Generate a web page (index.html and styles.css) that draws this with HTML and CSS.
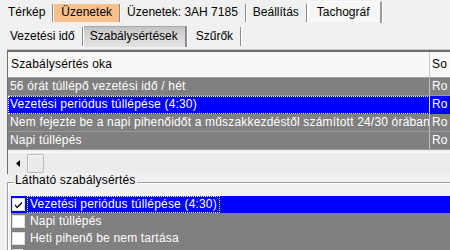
FILE: index.html
```html
<!DOCTYPE html>
<html>
<head>
<meta charset="utf-8">
<link rel="stylesheet" href="styles.css">
</head>
<body>
<div class="page">
  <div class="tabs1">
    <div class="tab t-terkep">Térkép</div>
    <div class="tab t-orange">Üzenetek</div>
    <div class="tab">Üzenetek: 3AH 7185</div>
    <div class="tab">Beállítás</div>
    <div class="tab sel1">Tachográf</div>
  </div>
  <div class="tabs2">
    <div class="tab2">Vezetési idő</div>
    <div class="tab2 sel2">Szabálysértések</div>
    <div class="tab2">Szűrők</div>
  </div>
  <div class="grid">
    <div class="row head">
      <div class="c1">Szabálysértés oka</div>
      <div class="c2">So</div>
    </div>
    <div class="row gray">
      <div class="c1">56 órát túllépő vezetési idő / hét</div>
      <div class="c2">Ro</div>
    </div>
    <div class="row blue">
      <div class="c1 focus">Vezetési periódus túllépése (4:30)</div>
      <div class="c2">Ro</div>
    </div>
    <div class="row gray">
      <div class="c1">Nem fejezte be a napi pihenőidőt a műszakkezdéstől számított 24/30 órában</div>
      <div class="c2">Ro</div>
    </div>
    <div class="row gray">
      <div class="c1">Napi túllépés</div>
      <div class="c2">Ro</div>
    </div>
    <div class="hscroll">
      <div class="arrow"><svg width="4" height="7" viewBox="0 0 4 7"><path d="M4 0 L0 3.5 L4 7 Z" fill="#000"/></svg></div>
      <div class="thumb"></div>
    </div>
  </div>
  <div class="group">
    <div class="legend">Látható szabálysértés</div>
    <div class="list">
      <div class="item selitem"><span class="cb"><svg width="11" height="11" viewBox="0 0 11 11"><path d="M2 5 L4 7.5 L9 2.5 L9 4.5 L4 9.5 L2 7 Z" fill="#000"/></svg></span><span class="lbl focus2">Vezetési periódus túllépése (4:30)</span></div>
      <div class="item"><span class="cb"></span><span class="lbl">Napi túllépés</span></div>
      <div class="item"><span class="cb"></span><span class="lbl">Heti pihenő be nem tartása</span></div>
      <div class="item"><span class="cb"></span><span class="lbl">Nem fejezte be a napi pihenőidőt a műszakkezdéstől számított 24/30 órában</span></div>
    </div>
  </div>
</div>
</body>
</html>
```
FILE: styles.css
```css
html, body {
  margin: 0;
  padding: 0;
  width: 450px;
  height: 250px;
  overflow: hidden;
  background: #f0f0f0;
  font-family: "Liberation Sans", Arial, sans-serif;
  font-size: 12px;
  color: #000;
}
.page {
  width: 450px;
  height: 250px;
  overflow: hidden;
}
.tabs1 {
  display: flex;
  height: 23px;
  padding-left: 2px;
  align-items: flex-end;
}
.tab {
  height: 18px;
  line-height: 17px;
  padding: 0 7px 0 6px;
  margin-bottom: 1px;
  border-right: 1px solid #8a8a8a;
  box-shadow: 1px 0 0 #ffffff;
  margin-right: 1px;
  white-space: nowrap;
}
.t-orange {
  background: #f9c08e;
  padding: 0 7px 0 7px;
}
.sel1 {
  height: 21px;
  line-height: 21px;
  background: #f6f6f6;
  border-top: 1px solid #ffffff;
  border-left: 1px solid #ffffff;
  border-right: 2px solid #9a9a9a;
  padding: 0 10px 0 8px;
  margin-bottom: 0;
}
.tabs2 {
  display: flex;
  height: 25px;
  padding-left: 2px;
  align-items: flex-end;
}
.tab2 {
  height: 19px;
  line-height: 19px;
  padding: 0 7px 0 8px;
  margin-bottom: 2px;
  border-right: 1px solid #8a8a8a;
  box-shadow: 1px 0 0 #ffffff;
  margin-right: 1px;
  white-space: nowrap;
}
.sel2 {
  height: 20px;
  line-height: 19px;
  background: linear-gradient(#c2c2c2, #d6d6d6 40%, #e2e2e2);
  border-top: 1px solid #a8a8a8;
  border-right: 2px solid #8a8a8a;
  padding: 0 7px 0 6px;
  margin-bottom: 1px;
}
.grid {
  margin: 2px 0 0 7px;
  border-top: 2px solid #6e6e6e;
  border-left: 1px solid #6e6e6e;
  box-shadow: 0 -1px 0 #c8c8c8;
  width: 460px;
}
.row {
  display: flex;
  height: 18px;
  line-height: 17px;
  white-space: nowrap;
  letter-spacing: 0.18px;
}
.c1 {
  width: 419px;
  padding-left: 2px;
  border-right: 1px solid #c0c0c0;
  overflow: hidden;
}
.c2 {
  padding-left: 2px;
  overflow: hidden;
}
.head {
  height: 26px;
  line-height: 24px;
  background: #f8f8f8;
  border-bottom: 1px solid #a0a0a0;
  box-sizing: border-box;
}
.head .c1 {
  border-right: 1px solid #c8c8c8;
  padding-left: 3px;
  width: 418px;
}
.gray {
  background: #808080;
  color: #ffffff;
  border-bottom: 1px solid #9a9a9a;
  box-sizing: border-box;
}
.blue {
  background: #0000ff;
  color: #ffffff;
  box-sizing: border-box;
}
.focus {
  outline: 1px dotted #ffffc0;
  outline-offset: -1px;
}
.hscroll {
  display: flex;
  align-items: center;
  height: 21px;
  margin-top: 2px;
  background: #ececec;
  border-top: 1px solid #f8f8f8;
}
.arrow {
  width: 16px;
  display: flex;
  justify-content: center;
  padding-left: 2px;
}
.thumb {
  width: 15px;
  height: 17px;
  background: #ebebeb;
  border: 1px solid #b8b8b8;
  border-radius: 2px;
  box-shadow: inset 1px 1px 0 #ffffff;
  margin-left: 1px;
}
.group {
  margin: 8px 0 0 7px;
  border-top: 1px solid #a0a0a0;
  border-left: 1px solid #a0a0a0;
  box-shadow: inset 1px 1px 0 #ffffff;
  position: relative;
  padding-top: 13px;
  padding-left: 3px;
}
.legend {
  position: absolute;
  top: -10px;
  left: 6px;
  background: #f0f0f0;
  padding: 0 1px;
  line-height: 15px;
  letter-spacing: 0.18px;
}
.list {
  display: flex;
  flex-direction: column;
}
.item {
  display: flex;
  align-items: center;
  height: 17px;
  background: #808080;
  color: #ffffff;
  white-space: nowrap;
  letter-spacing: 0.18px;
}
.selitem {
  background: #0000ff;
}
.cb {
  width: 13px;
  height: 13px;
  margin-left: 1px;
  margin-right: 3px;
  background: #ffffff;
  box-sizing: border-box;
  border: 1px solid #e0e0e0;
  display: flex;
  align-items: center;
  justify-content: center;
}
.lbl {
  padding: 0 2px;
  line-height: 15px;
}
.focus2 {
  outline: 1px dotted #ffffc0;
}
```
